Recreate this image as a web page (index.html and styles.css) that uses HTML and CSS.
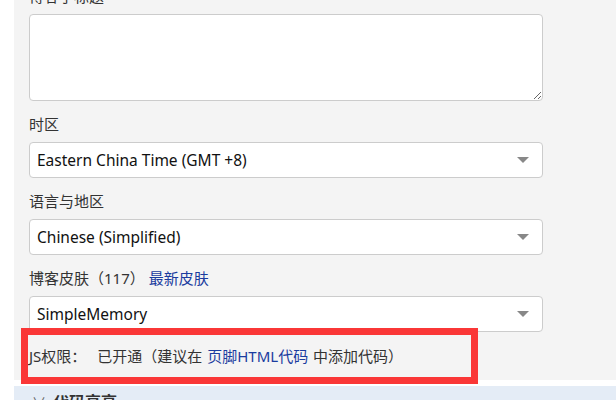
FILE: index.html
```html
<!DOCTYPE html>
<html lang="zh-CN">
<head>
<meta charset="utf-8">
<title>设置</title>
<link rel="stylesheet" href="styles.css">
</head>
<body>
<div class="page">
  <div class="panel">
    <div class="group">
      <label class="label">博客子标题</label>
      <textarea class="textarea"></textarea>
    </div>
    <div class="group">
      <label class="label">时区</label>
      <div class="select"><span>Eastern China Time (GMT +8)</span>
        <svg class="arrow" width="12" height="6" viewBox="0 0 12 6"><path d="M0 0H12L6 6Z" fill="#888"/></svg></div>
    </div>
    <div class="group">
      <label class="label">语言与地区</label>
      <div class="select"><span>Chinese (Simplified)</span>
        <svg class="arrow" width="12" height="6" viewBox="0 0 12 6"><path d="M0 0H12L6 6Z" fill="#888"/></svg></div>
    </div>
    <div class="group">
      <label class="label">博客皮肤（117） <a class="link" href="#">最新皮肤</a></label>
      <div class="select"><span>SimpleMemory</span>
        <svg class="arrow" width="12" height="6" viewBox="0 0 12 6"><path d="M0 0H12L6 6Z" fill="#888"/></svg></div>
    </div>
    <div class="js-row">
      <span class="js-key">JS权限：</span><span>已开通（建议在 <a class="link" href="#">页脚HTML代码</a> 中添加代码）</span>
      <div class="highlight"></div>
    </div>
  </div>
  <div class="section-head">
    <span class="chev">∨</span><span class="section-title">代码高亮</span>
  </div>
</div>
</body>
</html>
```
FILE: styles.css
```css
html, body {
  margin: 0;
  padding: 0;
  background: #ffffff;
  font-family: "Noto Sans", "Noto Sans CJK SC", sans-serif;
  color: #333333;
  overflow: hidden;
}
.page {
  padding-left: 14px;
}
.panel {
  background: #f4f4f4;
  margin-top: -15px;
  padding: 0 73px 12px 15px;
}
.group {
  display: flex;
  flex-direction: column;
  margin-bottom: 12px;
}
.label {
  font-size: 15px;
  line-height: 22px;
  margin-bottom: 7px;
  color: #333333;
}
.link {
  color: #1b3c9f;
  text-decoration: none;
}
.textarea {
  display: block;
  box-sizing: border-box;
  width: 514px;
  height: 87px;
  border: 1px solid #cccccc;
  border-radius: 4px;
  background: #ffffff;
  resize: both;
  margin: 0;
  font-family: inherit;
}
.select {
  box-sizing: border-box;
  height: 36px;
  width: 514px;
  border: 1px solid #cccccc;
  border-radius: 4px;
  background: #ffffff;
  display: flex;
  align-items: center;
  justify-content: space-between;
  padding: 0 13px 0 7px;
  font-size: 15.5px;
  color: #111111;
}
.arrow {
  display: block;
}
.js-row {
  position: relative;
  font-size: 15px;
  line-height: 24px;
  color: #333333;
  word-spacing: 1px;
}
.js-key {
  margin-right: 11px;
}
.highlight {
  position: absolute;
  left: -8px;
  top: -16px;
  width: 457px;
  height: 56px;
  box-sizing: border-box;
  border: 7px solid #fa3737;
}
.section-head {
  margin-top: 6px;
  background: #e4ecf6;
  height: 40px;
  padding: 5px 0 0 18px;
  font-size: 16px;
  line-height: 22px;
  color: #333333;
  display: flex;
  align-items: flex-start;
}
.chev {
  font-size: 14px;
  color: #666666;
  margin-right: 7px;
}
.section-title {
  font-weight: bold;
}
```
